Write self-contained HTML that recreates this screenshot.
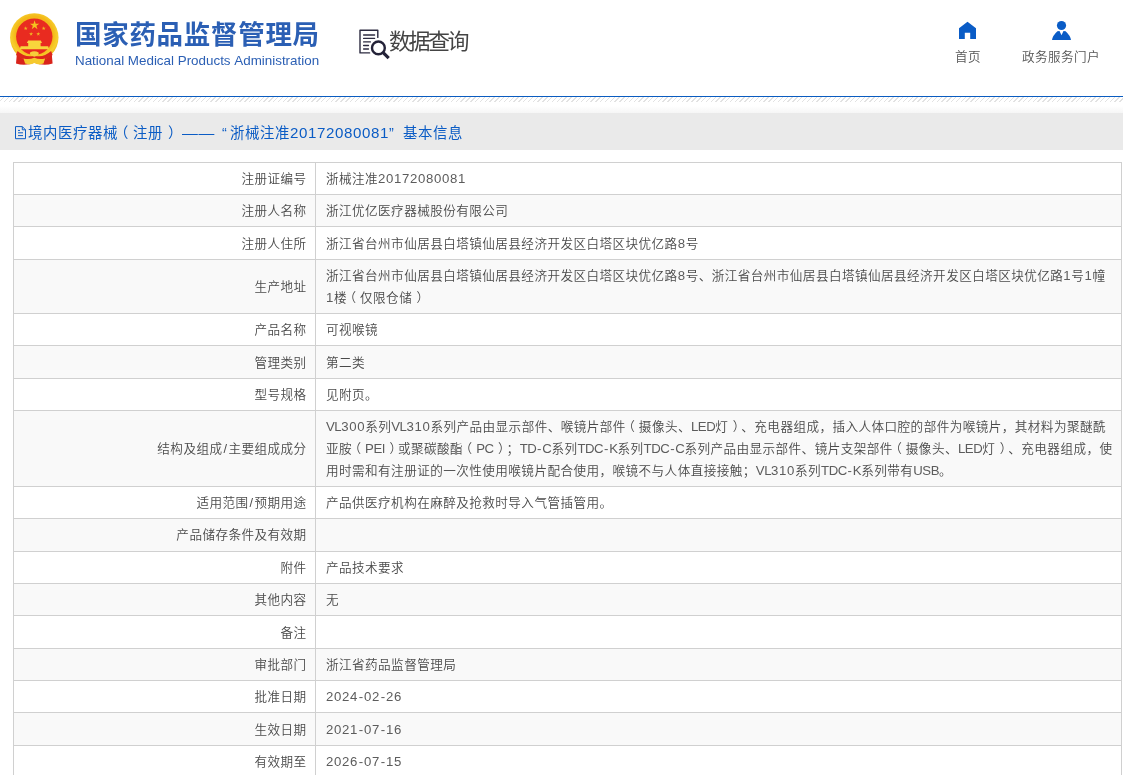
<!DOCTYPE html>
<html lang="zh-CN">
<head>
<meta charset="utf-8">
<title>国家药品监督管理局 数据查询</title>
<style>
*{box-sizing:border-box;margin:0;padding:0}
html,body{width:1123px;height:775px;overflow:hidden;background:#fff}
body{position:relative;-webkit-font-smoothing:antialiased;text-spacing-trim:space-all;font-kerning:none;font-family:"Liberation Sans","Noto Sans CJK SC",sans-serif;font-size:13px;color:#4a4a4a;font-weight:350}
.abs{position:absolute}
#title,#subtitle,#qtext,#hometxt,#usertxt,#bartxt{will-change:transform}
/* header */
#title{left:75px;top:17px;font-size:26.5px;font-weight:700;color:#2b5fb4;white-space:nowrap;line-height:36px;letter-spacing:.7px}
#subtitle{left:75px;top:52.5px;font-size:13.4px;font-weight:400;color:#2b5fb4;white-space:nowrap;line-height:16px}
#qtext{left:389px;top:27px;font-size:22px;font-weight:400;color:#444;white-space:nowrap;line-height:30px;letter-spacing:-2.5px}
#hometxt{left:954.5px;top:47px;font-size:12.6px;letter-spacing:.4px;color:#555;line-height:20px;white-space:nowrap}
#usertxt{left:1021.5px;top:47px;font-size:12.6px;letter-spacing:.4px;color:#555;line-height:20px;white-space:nowrap}
#blueline{left:0;top:96px;width:1123px;height:1px;background:#0a5cc0}
#hatch{left:0;top:97px;width:1123px;height:5px;background:repeating-linear-gradient(135deg,#fff 0,#fff 2.4px,#e2e2e2 2.4px,#e2e2e2 3.4px)}
#fade{left:0;top:102px;width:1123px;height:11px;background:linear-gradient(#fff 0,#fff 35%,#f6f6f6 100%)}
#bar{left:0;top:113px;width:1123px;height:37px;background:#eaeaea}
#bartxt{left:-.5px;top:122px;font-weight:400;font-size:14.4px;letter-spacing:.6px;color:#0b5cc5;line-height:22px;white-space:nowrap;width:600px;height:22px}
#bartxt>span{position:absolute;top:0;white-space:nowrap}
#bartxt .o{left:-4px}#bartxt .c{left:5px}
#bartxt i{font-size:15.1px;letter-spacing:.6px;color:inherit}
/* table */
#tbl{left:0;top:0;width:1123px;height:775px;will-change:transform}
#vline{left:315px;top:162px;width:1px;height:613px;background:#d0d0d0}
#lline{left:13px;top:162px;width:1px;height:613px;background:#d0d0d0}
#rline{left:1121px;top:162px;width:1px;height:613px;background:#d0d0d0}
.r{position:absolute;left:13px;width:1109px;border-top:1px solid #d0d0d0}
.r.g{background:#f9f9f9}
.l,.v{position:absolute;white-space:nowrap;line-height:22px;height:22px;font-size:12.6px;letter-spacing:.43px}
.l{right:815.4px;text-align:right}
.v{left:313px}
i{font-style:normal;font-size:13.2px;letter-spacing:.66px;color:#5c5c5c}
b{font-weight:inherit;font-size:13.2px;letter-spacing:-.46px;color:#5c5c5c}
em{font-style:normal;display:inline-block;width:6px;text-align:center;letter-spacing:0}
.o,.c{position:relative}.o{left:-3.6px}.c{left:4.4px}
u{text-decoration:none;display:inline-block;width:6px;text-align:center}
</style>
</head>
<body>
<div class="abs" id="title">国家药品监督管理局</div>
<div class="abs" id="subtitle">National Medical Products Administration</div>
<div class="abs" id="qtext">数据查询</div>
<div class="abs" id="hometxt">首页</div>
<div class="abs" id="usertxt">政务服务门户</div>
<div class="abs" id="blueline"></div>
<div class="abs" id="hatch"></div>
<div class="abs" id="fade"></div>
<div class="abs" id="bar"></div>
<svg class="abs" id="gfx" width="1123" height="160" viewBox="0 0 1123 160" style="left:0;top:0">
<defs>
<radialGradient id="gold" cx="0.5" cy="0.45" r="0.55"><stop offset="0.7" stop-color="#f3b818"/><stop offset="0.88" stop-color="#f7cf2e"/><stop offset="1" stop-color="#eeb41c"/></radialGradient>
</defs>
<!-- emblem -->
<path d="M17.2 50 L16 63.6 Q25 66.3 34.3 62.8 Q43.6 66.3 52.6 63.6 L51.4 50 Q44 57 34.3 56 Q24.6 57 17.2 50Z" fill="#d9231b"/>
<circle cx="34.3" cy="37.4" r="24.2" fill="url(#gold)"/>
<circle cx="34.3" cy="36.6" r="18.2" fill="#e92b20"/>
<path d="M17.5 51 Q26 58.5 34.3 55.5 Q42.6 58.5 51.1 51 L52.6 55 Q44 62 34.3 60 Q24.6 62 16 55Z" fill="#dd261c"/>
<polygon points="34.60,20.30 35.70,23.69 39.26,23.69 36.38,25.78 37.48,29.16 34.60,27.07 31.72,29.16 32.82,25.78 29.94,23.69 33.50,23.69" fill="#f4c21f"/>
<polygon points="25.70,26.30 26.17,27.75 27.70,27.75 26.46,28.65 26.93,30.10 25.70,29.20 24.47,30.10 24.94,28.65 23.70,27.75 25.23,27.75" fill="#f0b722"/>
<polygon points="43.70,26.30 44.17,27.75 45.70,27.75 44.46,28.65 44.93,30.10 43.70,29.20 42.47,30.10 42.94,28.65 41.70,27.75 43.23,27.75" fill="#f0b722"/>
<polygon points="31.10,31.90 31.57,33.35 33.10,33.35 31.86,34.25 32.33,35.70 31.10,34.80 29.87,35.70 30.34,34.25 29.10,33.35 30.63,33.35" fill="#f0b722"/>
<polygon points="38.30,31.90 38.77,33.35 40.30,33.35 39.06,34.25 39.53,35.70 38.30,34.80 37.07,35.70 37.54,34.25 36.30,33.35 37.83,33.35" fill="#f0b722"/>
<path d="M28.2 40.6 H40.8 L42 43 H40.6 V46.3 H48.2 L49 49.2 H19.8 L20.6 46.3 H28.2 V43 H26.8Z" fill="#f8d63c"/>
<path d="M30 52.5 Q34.3 50 38.6 52.5 Q39.6 55.5 34.3 56.8 Q29 55.5 30 52.5Z" fill="#f6cf3a"/>
<path d="M23.5 58.5 Q29 60 34.3 57.8 Q39.6 60 45.1 58.5 L43.5 63.6 Q38.5 65.5 34.3 63 Q30.1 65.5 25.1 63.6Z" fill="#f5c92e"/>
<!-- query icon -->
<g fill="none" stroke="#2c2b40" stroke-linecap="round" stroke-linejoin="round">
<path d="M377.8 37.4 V30.3 H360 V52.9 H369.6" stroke-width="1.4"/>
<path d="M363.6 35 H374.6 M363.6 38.4 H374.6 M363.6 41.9 H370.4 M363.6 45.5 H368.5 M363.6 49 H368.5" stroke-width="1.3"/>
<circle cx="378.4" cy="47.9" r="6.4" stroke-width="2.4" stroke="#232238"/>
<path d="M383.4 52.8 L388.7 58.1" stroke-width="3.2" stroke="#232238" stroke-linecap="butt"/>
</g>
<!-- home -->
<path d="M959 39 V28.2 L967.5 21.8 L976 28.2 V39 H970.2 V32.8 H964.8 V39Z" fill="#0a5cc6"/>
<!-- user -->
<circle cx="1061.5" cy="25.5" r="4.6" fill="#0a5cc6"/>
<path d="M1052 40 Q1052.6 35.6 1057.4 31.2 L1059.5 31 L1061.5 35.3 L1063.5 31 L1065.6 31.2 Q1070.4 35.6 1071 40Z" fill="#0a5cc6"/>
<!-- doc icon in bar -->
<g fill="none" stroke="#0b5cc5" stroke-width="1">
<path d="M15.5 126.6 H22.3 L25.5 129.8 V138.7 H15.5Z"/>
<path d="M22.3 126.6 V129.8 H25.5"/>
<path d="M18 130.4 H20 M18 132.8 H23 M18 135.6 H23"/>
</g>
</svg>
<div class="abs" id="bartxt"><span style="left:28px">境内医疗器械<span class="o">（</span>注册<span class="c">）</span></span><span style="left:182px;transform:scaleX(1.1);transform-origin:0 0">——</span><span style="left:222px">“</span><span style="left:230px">浙械注准<i>20172080081</i></span><span style="left:389px">”</span><span style="left:403px">基本信息</span></div>

<div class="abs" id="tbl">
<div class="r" style="top:162px;height:32px"><span class="l" style="top:5px">注册证编号</span><span class="v" style="top:5px">浙械注准<i>20172080081</i></span></div>
<div class="r g" style="top:194px;height:32px"><span class="l" style="top:5px">注册人名称</span><span class="v" style="top:5px">浙江优亿医疗器械股份有限公司</span></div>
<div class="r" style="top:226px;height:33px"><span class="l" style="top:6px">注册人住所</span><span class="v" style="top:6px">浙江省台州市仙居县白塔镇仙居县经济开发区白塔区块优亿路<i>8</i>号</span></div>
<div class="r g" style="top:259px;height:54px"><span class="l" style="top:16px">生产地址</span><span class="v" style="top:5px">浙江省台州市仙居县白塔镇仙居县经济开发区白塔区块优亿路<i>8</i>号、浙江省台州市仙居县白塔镇仙居县经济开发区白塔区块优亿路<i>1</i>号<i>1</i>幢</span><span class="v" style="top:27px"><i>1</i>楼<span class="o">（</span>仅限仓储<span class="c">）</span></span></div>
<div class="r" style="top:313px;height:32px"><span class="l" style="top:5px">产品名称</span><span class="v" style="top:5px">可视喉镜</span></div>
<div class="r g" style="top:345px;height:33px"><span class="l" style="top:6px">管理类别</span><span class="v" style="top:6px">第二类</span></div>
<div class="r" style="top:378px;height:32px"><span class="l" style="top:5px">型号规格</span><span class="v" style="top:5px">见附页。</span></div>
<div class="r g" style="top:410px;height:76px"><span class="l" style="top:27px">结构及组成<u>/</u>主要组成成分</span><span class="v" style="top:5px"><b>VL</b><i>300</i>系列<b>VL</b><i>310</i>系列产品由显示部件、喉镜片部件<span class="o">（</span>摄像头、<b>LED</b>灯<span class="c">）</span>、充电器组成，插入人体口腔的部件为喉镜片，其材料为聚醚酰</span><span class="v" style="top:27px">亚胺<span class="o">（</span><b>PEI</b><span class="c">）</span>或聚碳酸酯<span class="o">（</span><b>PC</b><span class="c">）</span>；<b>TD<em>-</em>C</b>系列<b>TDC<em>-</em>K</b>系列<b>TDC<em>-</em>C</b>系列产品由显示部件、镜片支架部件<span class="o">（</span>摄像头、<b>LED</b>灯<span class="c">）</span>、充电器组成，使</span><span class="v" style="top:49px">用时需和有注册证的一次性使用喉镜片配合使用，喉镜不与人体直接接触；<b>VL</b><i>310</i>系列<b>TDC<em>-</em>K</b>系列带有<b>USB</b>。</span></div>
<div class="r" style="top:486px;height:32px"><span class="l" style="top:5px">适用范围<u>/</u>预期用途</span><span class="v" style="top:5px">产品供医疗机构在麻醉及抢救时导入气管插管用。</span></div>
<div class="r g" style="top:518px;height:33px"><span class="l" style="top:5px">产品储存条件及有效期</span></div>
<div class="r" style="top:551px;height:32px"><span class="l" style="top:5px">附件</span><span class="v" style="top:5px">产品技术要求</span></div>
<div class="r g" style="top:583px;height:32px"><span class="l" style="top:5px">其他内容</span><span class="v" style="top:5px">无</span></div>
<div class="r" style="top:615px;height:33px"><span class="l" style="top:6px">备注</span></div>
<div class="r g" style="top:648px;height:32px"><span class="l" style="top:5px">审批部门</span><span class="v" style="top:5px">浙江省药品监督管理局</span></div>
<div class="r" style="top:680px;height:32px"><span class="l" style="top:5px">批准日期</span><span class="v" style="top:5px"><i>2024<em>-</em>02<em>-</em>26</i></span></div>
<div class="r g" style="top:712px;height:33px"><span class="l" style="top:6px">生效日期</span><span class="v" style="top:6px"><i>2021<em>-</em>07<em>-</em>16</i></span></div>
<div class="r" style="top:745px;height:33px"><span class="l" style="top:5px">有效期至</span><span class="v" style="top:5px"><i>2026<em>-</em>07<em>-</em>15</i></span></div>
<div class="abs" id="vline"></div><div class="abs" id="lline"></div><div class="abs" id="rline"></div>
</div>
</body>
</html>
